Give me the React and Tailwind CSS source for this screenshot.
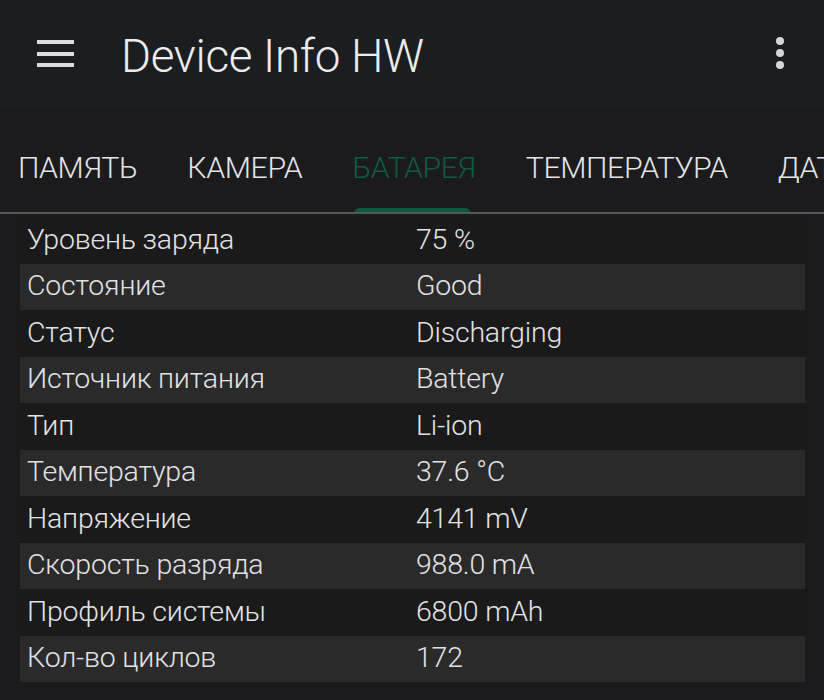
import { useState } from 'react';

const tabs = ['ПАМЯТЬ', 'КАМЕРА', 'БАТАРЕЯ', 'ТЕМПЕРАТУРА', 'ДАТЧИКИ'];

const battery = [
  ['Уровень заряда', '75 %'],
  ['Состояние', 'Good'],
  ['Статус', 'Discharging'],
  ['Источник питания', 'Battery'],
  ['Тип', 'Li-ion'],
  ['Температура', '37.6 °C'],
  ['Напряжение', '4141 mV'],
  ['Скорость разряда', '988.0 mA'],
  ['Профиль системы', '6800 mAh'],
  ['Кол-во циклов', '172'],
];

const App = () => {
  const [active, setActive] = useState(2);

  return (
    <div className="w-[824px] h-[700px] overflow-hidden bg-[#1b1b1e] text-[#e2e2e4] font-['Roboto',sans-serif]">
      {/* Toolbar */}
      <header className="h-[108px] bg-[#1b1e21] flex items-start pt-[31px]">
        <button className="ml-[37px] mt-[9px] w-[37px] flex flex-col gap-[7.5px]">
          <span className="block h-[4px] bg-[#dcdcde]" />
          <span className="block h-[4px] bg-[#dcdcde]" />
          <span className="block h-[4px] bg-[#dcdcde]" />
        </button>
        <h1 className="ml-[47px] text-[45.8px] leading-[52px] font-light tracking-[-0.3px] text-[#ececee]">
          Device Info HW
        </h1>
        <button className="ml-auto mr-[40px] mt-[6px] flex flex-col gap-[4px]">
          <span className="block w-[8px] h-[8px] rounded-full bg-[#d6d6d8]" />
          <span className="block w-[8px] h-[8px] rounded-full bg-[#d6d6d8]" />
          <span className="block w-[8px] h-[8px] rounded-full bg-[#d6d6d8]" />
        </button>
      </header>

      {/* Tabs */}
      <nav className="relative h-[106px] border-b-2 border-[#55555a] overflow-hidden">
        <div className="flex pl-[18px] gap-[50px] whitespace-nowrap pt-[39px]">
          {tabs.map((t, i) => (
            <button
              key={t}
              onClick={() => setActive(i)}
              className={`relative text-[30.3px] leading-[41px] font-light tracking-[-0.4px] pb-[24px] ${
                i === active ? 'text-[#0f5a42]' : 'text-[#e4e4e6]'
              }`}
            >
              {t}
              {i === active && (
                <span className="absolute left-[2px] right-[5px] -bottom-[2px] h-[6px] rounded-t-full bg-[#0e5a41]" />
              )}
            </button>
          ))}
        </div>
      </nav>

      {/* Battery info table */}
      <div className="mx-[20px] mt-[3px] w-[785px]">
        {battery.map(([label, value], i) => (
          <div
            key={label}
            className={`h-[46.5px] flex items-center text-[28.5px] font-light tracking-[-0.2px] ${
              i % 2 ? 'bg-[#2a2a2b]' : 'bg-[#1a1a1b]'
            }`}
          >
            <span className="w-[396px] pl-[7px]">{label}</span>
            <span>{value}</span>
          </div>
        ))}
      </div>
    </div>
  );
};

export default App;
